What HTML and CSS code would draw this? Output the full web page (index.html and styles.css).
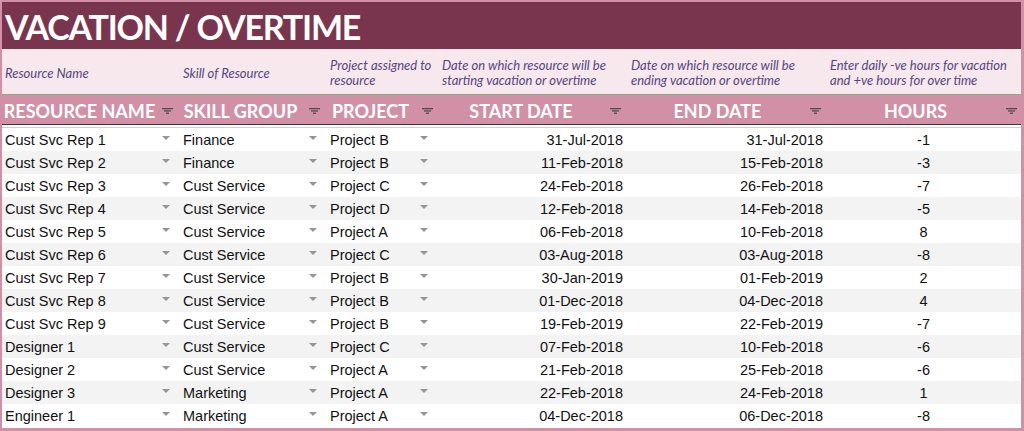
FILE: index.html
```html
<!DOCTYPE html>
<html>
<head>
<meta charset="utf-8">
<link rel="stylesheet" href="styles.css">
</head>
<body>
<div class="sheet">
  <div class="title">VACATION / OVERTIME</div>
  <div class="grid desc">
    <div class="dcell c1">Resource Name</div>
    <div class="dcell c2">Skill of Resource</div>
    <div class="dcell c3">Project assigned to resource</div>
    <div class="dcell c4">Date on which resource will be starting vacation or overtime</div>
    <div class="dcell c5">Date on which resource will be ending vacation or overtime</div>
    <div class="dcell c6">Enter daily -ve hours for vacation and +ve hours for over time</div>
  </div>
  <div class="grid head">
    <div class="hcell"><span class="htext">RESOURCE NAME</span><svg class="filter" viewBox="0 0 11 6"><rect x="0" y="0" width="11" height="1.3"/><rect x="2" y="2.3" width="7" height="1.3"/><rect x="4" y="4.6" width="3" height="1.3"/></svg></div>
    <div class="hcell"><span class="htext">SKILL GROUP</span><svg class="filter" viewBox="0 0 11 6"><rect x="0" y="0" width="11" height="1.3"/><rect x="2" y="2.3" width="7" height="1.3"/><rect x="4" y="4.6" width="3" height="1.3"/></svg></div>
    <div class="hcell"><span class="htext">PROJECT</span><svg class="filter" viewBox="0 0 11 6"><rect x="0" y="0" width="11" height="1.3"/><rect x="2" y="2.3" width="7" height="1.3"/><rect x="4" y="4.6" width="3" height="1.3"/></svg></div>
    <div class="hcell wide"><span class="htext">START DATE</span><svg class="filter" viewBox="0 0 11 6"><rect x="0" y="0" width="11" height="1.3"/><rect x="2" y="2.3" width="7" height="1.3"/><rect x="4" y="4.6" width="3" height="1.3"/></svg></div>
    <div class="hcell wide"><span class="htext">END DATE</span><svg class="filter" viewBox="0 0 11 6"><rect x="0" y="0" width="11" height="1.3"/><rect x="2" y="2.3" width="7" height="1.3"/><rect x="4" y="4.6" width="3" height="1.3"/></svg></div>
    <div class="hcell"><span class="htext">HOURS</span><svg class="filter" viewBox="0 0 11 6"><rect x="0" y="0" width="11" height="1.3"/><rect x="2" y="2.3" width="7" height="1.3"/><rect x="4" y="4.6" width="3" height="1.3"/></svg></div>
  </div>
  <div class="gap"></div>
  <div class="rows" id="rows"></div>
</div>
<script src="app.js"></script>
</body>
</html>
```
FILE: app.js
```js
const data = [
  ["Cust Svc Rep 1","Finance","Project B","31-Jul-2018","31-Jul-2018","-1"],
  ["Cust Svc Rep 2","Finance","Project B","11-Feb-2018","15-Feb-2018","-3"],
  ["Cust Svc Rep 3","Cust Service","Project C","24-Feb-2018","26-Feb-2018","-7"],
  ["Cust Svc Rep 4","Cust Service","Project D","12-Feb-2018","14-Feb-2018","-5"],
  ["Cust Svc Rep 5","Cust Service","Project A","06-Feb-2018","10-Feb-2018","8"],
  ["Cust Svc Rep 6","Cust Service","Project C","03-Aug-2018","03-Aug-2018","-8"],
  ["Cust Svc Rep 7","Cust Service","Project B","30-Jan-2019","01-Feb-2019","2"],
  ["Cust Svc Rep 8","Cust Service","Project B","01-Dec-2018","04-Dec-2018","4"],
  ["Cust Svc Rep 9","Cust Service","Project B","19-Feb-2019","22-Feb-2019","-7"],
  ["Designer 1","Cust Service","Project C","07-Feb-2018","10-Feb-2018","-6"],
  ["Designer 2","Cust Service","Project A","21-Feb-2018","25-Feb-2018","-6"],
  ["Designer 3","Marketing","Project A","22-Feb-2018","24-Feb-2018","1"],
  ["Engineer 1","Marketing","Project A","04-Dec-2018","06-Dec-2018","-8"]
];
const tri = '<svg class="tri" viewBox="0 0 8 4"><polygon points="0,0 8,0 4,4"/></svg>';
const rows = document.getElementById("rows");
rows.innerHTML = data.map(r =>
  '<div class="grid row">' +
  '<div class="cell drop c1"><span>' + r[0] + '</span>' + tri + '</div>' +
  '<div class="cell drop c2"><span>' + r[1] + '</span>' + tri + '</div>' +
  '<div class="cell drop c3"><span>' + r[2] + '</span>' + tri + '</div>' +
  '<div class="cell date">' + r[3] + '</div>' +
  '<div class="cell date">' + r[4] + '</div>' +
  '<div class="cell num">' + r[5] + '</div>' +
  '</div>'
).join("");
```
FILE: styles.css
```css
html, body {
  margin: 0;
  padding: 0;
  background: #ffffff;
}

.sheet {
  width: 1024px;
  height: 431px;
  box-sizing: border-box;
  border-style: solid;
  border-color: #d190a6;
  border-width: 2px 3px 3px 2px;
  display: flex;
  flex-direction: column;
  overflow: hidden;
}

.title {
  height: 47px;
  flex: none;
  background: #7a354e;
  color: #ffffff;
  font-family: "Lato", "Open Sans", sans-serif;
  font-weight: 700;
  font-size: 34px;
  line-height: 49px;
  padding-left: 3px;
  white-space: nowrap;
  letter-spacing: -1.2px;
}

.grid {
  display: grid;
  grid-template-columns: 175px 147px 113px 193px 200px 191px;
}

.desc {
  height: 42px;
  flex: none;
  padding-top: 3px;
  background: #f6e8ed;
  border-bottom: 1px solid #86ad85;
  font-family: "Lato", "Open Sans", sans-serif;
  font-style: italic;
  font-size: 13px;
  line-height: 15px;
  color: #55457f;
}

.dcell {
  display: flex;
  align-items: center;
  padding-right: 2px;
}

.dcell.c1 { padding-left: 3px; }
.dcell.c2 { padding-left: 6px; }
.dcell.c3 { padding-left: 6px; }
.dcell.c4 { padding-left: 5px; }
.dcell.c5 { padding-left: 1px; }
.dcell.c6 { padding-left: 0; }

.head {
  height: 29px;
  flex: none;
  background: #d190a6;
  border-bottom: 1px solid #3a3a3a;
  font-family: "Lato", "Open Sans", sans-serif;
  font-weight: 700;
  font-size: 18px;
  color: #ffffff;
}

.hcell {
  display: flex;
  align-items: center;
  padding-right: 4px;
}

.hcell.wide {
  padding-right: 9px;
}

.htext {
  flex: 1;
  text-align: center;
  white-space: nowrap;
  padding-top: 2px;
}

.filter {
  width: 11px;
  height: 6px;
  fill: #4d4d4d;
  margin-left: 5px;
  margin-top: 2px;
  flex: none;
}

.gap {
  height: 2px;
  flex: none;
  background: #ffffff;
  border-bottom: 1px solid #cfcfcf;
}

.rows {
  flex: 1;
  font-family: "Liberation Sans", Arial, sans-serif;
  font-size: 14.5px;
  color: #111111;
}

.row {
  height: 23px;
  background: #ffffff;
}

.row:nth-child(even) {
  background: #f3f3f3;
}

.cell {
  display: flex;
  align-items: center;
  white-space: nowrap;
}

.drop {
  justify-content: space-between;
  padding-right: 7px;
}

.drop.c1 { padding-left: 3px; }
.drop.c2 { padding-left: 6px; }
.drop.c3 { padding-left: 6px; padding-right: 9px; }

.tri {
  width: 8px;
  height: 4px;
  fill: #959595;
  margin-bottom: 3px;
  flex: none;
}

.date {
  justify-content: flex-end;
  padding-right: 7px;
}

.num {
  justify-content: center;
  padding-right: 4px;
}
```
